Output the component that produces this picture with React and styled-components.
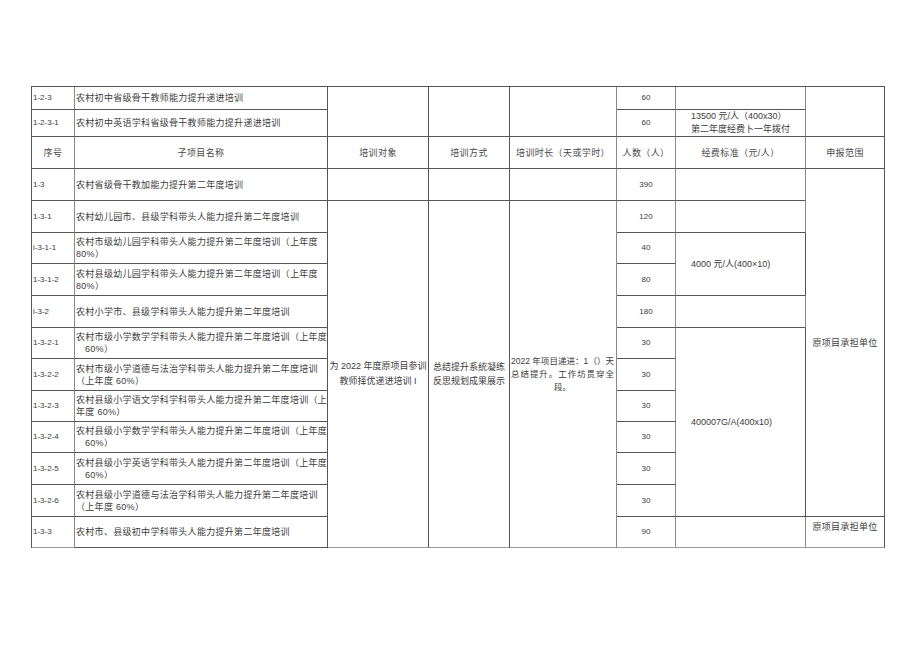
import React from "react";
import styled, { createGlobalStyle } from "styled-components";

const GlobalStyle = createGlobalStyle`
  html, body {
    margin: 0;
    padding: 0;
    background: #fff;
  }
  body {
    font-family: "Liberation Sans", "Noto Sans CJK SC", sans-serif;
  }
`;

const Page = styled.div`
  width: 920px;
  height: 651px;
  box-sizing: border-box;
  padding: 86px 0 0 31px;
  background: #fff;
`;

const Sheet = styled.table`
  border-collapse: separate;
  border-spacing: 0;
  table-layout: fixed;
  width: 853px;
  border-top: 1px solid #555;
  border-left: 1px solid #555;
  color: #3c3c3c;
  font-family: "Liberation Sans", "Noto Sans CJK SC", sans-serif;
`;

const Row = styled.tr`
  height: ${(p) => p.$h}px;
`;

const Cell = styled.td`
  box-sizing: border-box;
  height: ${(p) => (p.$h ? `${p.$h}px` : "auto")};
  padding: ${(p) => p.$pad || "0 1px"};
  border-right: 1px solid ${(p) => (p.$light ? "#8a8a8a" : "#555")};
  border-bottom: 1px solid ${(p) => (p.$soft ? "#9a9a9a" : "#555")};
  text-align: ${(p) => p.$align || "left"};
  vertical-align: ${(p) => p.$va || "middle"};
  font-size: ${(p) => p.$fs || 9}px;
  line-height: ${(p) => p.$lh || 12}px;
  letter-spacing: ${(p) => (p.$tight ? 0 : 0.3)}px;
  white-space: nowrap;
  overflow: hidden;
`;

const IdCell = styled(Cell)`
  font-size: 8px;
  letter-spacing: 0;
  padding-left: 1px;
`;

const NumCell = styled(Cell)`
  font-size: 8px;
  letter-spacing: 0;
  text-align: center;
`;

const HeadCell = styled(Cell)`
  text-align: center;
  font-size: 9px;
  letter-spacing: 0.4px;
  color: #4a4a4a;
`;

const Indent = styled.span`
  padding-left: 9px;
`;

const Line = styled.div`
  text-align: ${(p) => (p.$last ? "center" : "justify")};
  text-align-last: ${(p) => (p.$last ? "center" : "justify")};
`;

const Fee = styled(Cell)`
  padding-left: 15px;
  letter-spacing: 0;
`;

const items = [
  { id: "1-3-1", h: 32, name: "农村幼儿园市、县级学科带头人能力提升第二年度培训", num: "120" },
  { id: "i-3-1-1", h: 31, name: "农村市级幼儿园学科带头人能力提升第二年度培训（上年度", tail: "80%）", num: "40" },
  { id: "1-3-1-2", h: 32, name: "农村县级幼儿园学科带头人能力提升第二年度培训（上年度", tail: "80%）", num: "80" },
  { id: "i-3-2", h: 32, name: "农村小学市、县级学科带头人能力提升第二年度培训", num: "180" },
  { id: "1-3-2-1", h: 31, name: "农村市级小学数学学科带头人能力提升第二年度培训（上年度", tail: "60%）", indent: true, num: "30" },
  { id: "1-3-2-2", h: 32, name: "农村市级小学道德与法治学科带头人能力提升第二年度培训", tail: "（上年度 60%）", num: "30" },
  { id: "1-3-2-3", h: 31, name: "农村县级小学语文学科学科带头人能力提升第二年度培训（上", tail: "年度 60%）", num: "30" },
  { id: "1-3-2-4", h: 31, name: "农村县级小学数学学科带头人能力提升第二年度培训（上年度", tail: "60%）", indent: true, num: "30" },
  { id: "1-3-2-5", h: 32, name: "农村县级小学英语学科带头人能力提升第二年度培训（上年度", tail: "60%）", indent: true, num: "30" },
  { id: "1-3-2-6", h: 32, name: "农村县级小学道德与法治学科带头人能力提升第二年度培训", tail: "（上年度 60%）", num: "30" },
  { id: "1-3-3", h: 31, name: "农村市、县级初中学科带头人能力提升第二年度培训", num: "90" },
];

const Name = ({ item }) => (
  <Cell $h={item.h}>
    {item.name}
    {item.tail && (
      <>
        <br />
        {item.indent ? <Indent>{item.tail}</Indent> : item.tail}
      </>
    )}
  </Cell>
);

const FeeCell = ({ index }) => {
  if (index === 1) {
    return <Fee rowSpan={2}>4000 元/人(400×10)</Fee>;
  }
  if (index === 4) {
    return <Fee rowSpan={6}>400007G/A(400x10)</Fee>;
  }
  if (index === 0 || index === 3 || index === 10) {
    return <Cell $light $soft={index === 10} />;
  }
  return null;
};

const App = () => {
  return (
    <Page>
      <GlobalStyle />
      <Sheet>
        <colgroup>
          <col style={{ width: 43 }} />
          <col style={{ width: 253 }} />
          <col style={{ width: 101 }} />
          <col style={{ width: 81 }} />
          <col style={{ width: 107 }} />
          <col style={{ width: 59 }} />
          <col style={{ width: 130 }} />
          <col style={{ width: 79 }} />
        </colgroup>
        <tbody>
          <Row $h={23}>
            <IdCell $light $h={23}>1-2-3</IdCell>
            <Cell>农村初中省级骨干教师能力提升递进培训</Cell>
            <Cell rowSpan={2} />
            <Cell rowSpan={2} />
            <Cell rowSpan={2} $light />
            <NumCell $light>60</NumCell>
            <Cell $light />
            <Cell rowSpan={2} />
          </Row>
          <Row $h={27}>
            <IdCell $light $h={27}>1-2-3-1</IdCell>
            <Cell>农村初中英语学科省级骨干教师能力提升递进培训</Cell>
            <NumCell $light>60</NumCell>
            <Fee $light $lh={13} $pad="0 1px 0 13px">
              13500 元/人（400x30）
              <br />
              第二年度经费卜一年拨付
            </Fee>
          </Row>
          <Row $h={32}>
            <HeadCell $light $h={32}>序号</HeadCell>
            <HeadCell>子项目名称</HeadCell>
            <HeadCell>培训对象</HeadCell>
            <HeadCell>培训方式</HeadCell>
            <HeadCell $light>培训时长（天或学时）</HeadCell>
            <HeadCell $light>人数（人）</HeadCell>
            <HeadCell $light>经费标准（元/人）</HeadCell>
            <HeadCell>申报范围</HeadCell>
          </Row>
          <Row $h={32}>
            <IdCell $light $h={32}>1-3</IdCell>
            <Cell>农村省级骨干教加能力提升第二年度培训</Cell>
            <Cell />
            <Cell />
            <Cell $light />
            <NumCell $light>390</NumCell>
            <Cell $light />
            <Cell rowSpan={11} $align="center">
              原项目承担单位
            </Cell>
          </Row>
          {items.map((item, i) => (
            <Row key={item.id} $h={item.h}>
              <IdCell $light $soft={i === 10} $h={item.h}>
                {item.id}
              </IdCell>
              <Name item={item} />
              {i === 0 && (
                <>
                  <Cell rowSpan={11} $align="center" $lh={15} $soft $tight $pad="0">
                    为 2022 年度原项目参训
                    <br />
                    教师择优递进培训 I
                  </Cell>
                  <Cell rowSpan={11} $align="center" $lh={14} $soft $tight $pad="0">
                    总结提升系统凝练
                    <br />
                    反思规划成果展示
                  </Cell>
                  <Cell rowSpan={11} $light $soft $tight $pad="0 2px 0 1px" $lh={13} $fs={8.5}>
                    <Line>2022 年项目递进：1（）天</Line>
                    <Line>总结提升。工作坊贯穿全</Line>
                    <Line $last>段。</Line>
                  </Cell>
                </>
              )}
              <NumCell $light $soft={i === 10}>
                {item.num}
              </NumCell>
              <FeeCell index={i} />
              {i === 10 && (
                <Cell $align="center" $va="top" $pad="4px 1px 0" $soft>
                  原项目承担单位
                </Cell>
              )}
            </Row>
          ))}
        </tbody>
      </Sheet>
    </Page>
  );
};

export default App;
